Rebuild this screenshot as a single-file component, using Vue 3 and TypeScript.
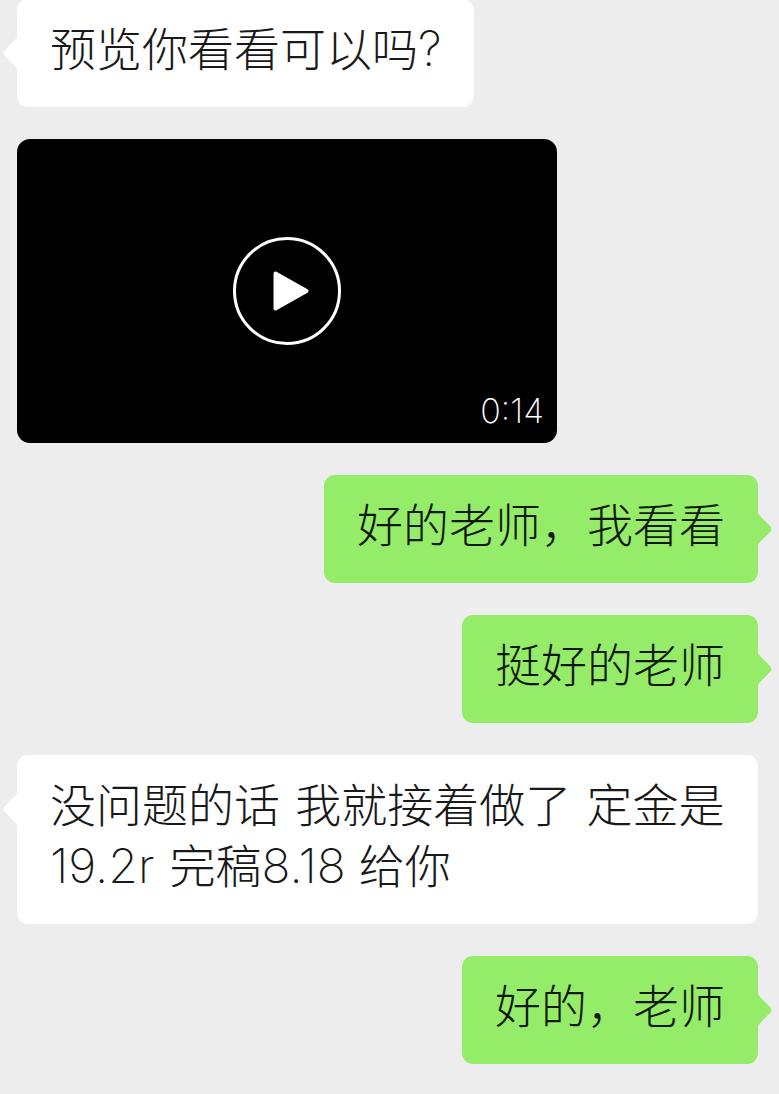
<script setup lang="ts">
interface Run {
  text: string
  style?: 'number' | 'space'
}

interface Message {
  id: number
  side: 'received' | 'sent'
  kind: 'text' | 'video'
  runs?: Run[]
  duration?: string
}

const messages: Message[] = [
  { id: 1, side: 'received', kind: 'text', runs: [{ text: '预览你看看可以吗' }, { text: '?', style: 'number' }] },
  { id: 2, side: 'received', kind: 'video', duration: '0:14' },
  { id: 3, side: 'sent', kind: 'text', runs: [{ text: '好的老师，我看看' }] },
  { id: 4, side: 'sent', kind: 'text', runs: [{ text: '挺好的老师' }] },
  {
    id: 5,
    side: 'received',
    kind: 'text',
    runs: [
      { text: '没问题的话' },
      { text: ' ', style: 'space' },
      { text: '我就接着做了' },
      { text: ' ', style: 'space' },
      { text: '定金是' },
      { text: ' ', style: 'space' },
      { text: '19.2r', style: 'number' },
      { text: ' ', style: 'space' },
      { text: '完稿' },
      { text: '8.18', style: 'number' },
      { text: ' ' },
      { text: '给你' },
    ],
  },
  { id: 6, side: 'sent', kind: 'text', runs: [{ text: '好的，老师' }] },
]
</script>

<template>
  <main class="chat">
    <div v-for="message in messages" :key="message.id" class="row" :class="message.side">
      <div v-if="message.kind === 'text'" class="bubble">
        <svg class="tail" viewBox="0 0 15 36" aria-hidden="true">
          <path d="M15 0 Q14 3 11 6 L1.5 15.5 Q-0.5 18 1.5 20.5 L11 30 Q14 33 15 36 Z" />
        </svg>
        <p class="text"><span v-for="(run, index) in message.runs" :key="index" :class="run.style">{{ run.text }}</span></p>
      </div>
      <button v-else class="video" type="button" aria-label="播放视频">
        <svg class="play" viewBox="0 0 108 108" aria-hidden="true">
          <circle cx="54" cy="54" r="52.5" />
          <path d="M42.5 36.5 L73.5 54 L42.5 71.5 Z" />
        </svg>
        <span class="duration">{{ message.duration }}</span>
      </button>
    </div>
  </main>
</template>

<style>
body {
  margin: 0;
  background: #ededed;
}
</style>

<style scoped>
.chat {
  display: flex;
  flex-direction: column;
  gap: 32px;
  box-sizing: border-box;
  min-height: 100vh;
  margin-top: -1px;
  padding: 0 21px 30px 17px;
  background: #ededed;
  font-family: Inter, "Noto Sans CJK SC", sans-serif;
  font-weight: 200;
}

.row {
  display: flex;
}

.sent {
  justify-content: flex-end;
}

.bubble {
  position: relative;
  max-width: 676px;
  padding: 20px 33px 27px;
  border-radius: 11px;
  background: #fff;
  color: #191919;
}

.sent .bubble {
  background: #95ec69;
  color: #10190b;
}

.text {
  margin: 0;
  font-size: 46px;
  line-height: 61px;
}

.number {
  font-size: 48px;
  line-height: 1;
}

.space {
  font-size: 54px;
  line-height: 1;
}

.tail {
  position: absolute;
  top: 36px;
  left: -14px;
  width: 15px;
  height: 36px;
  fill: #fff;
}

.sent .tail {
  right: -14px;
  left: auto;
  fill: #95ec69;
  transform: scaleX(-1);
}

.video {
  position: relative;
  display: flex;
  align-items: center;
  justify-content: center;
  width: 540px;
  aspect-ratio: 540 / 304;
  padding: 0;
  border: 0;
  border-radius: 13px;
  background: #000;
  color: #fff;
  font: inherit;
  cursor: pointer;
}

.play {
  width: 108px;
  height: 108px;
}

.play circle {
  fill: none;
  stroke: #fff;
  stroke-width: 3;
}

.play path {
  fill: #fff;
  stroke: #fff;
  stroke-width: 4;
  stroke-linejoin: round;
}

.duration {
  position: absolute;
  right: 13px;
  bottom: 12px;
  font-size: 34px;
  line-height: 40px;
}
</style>
